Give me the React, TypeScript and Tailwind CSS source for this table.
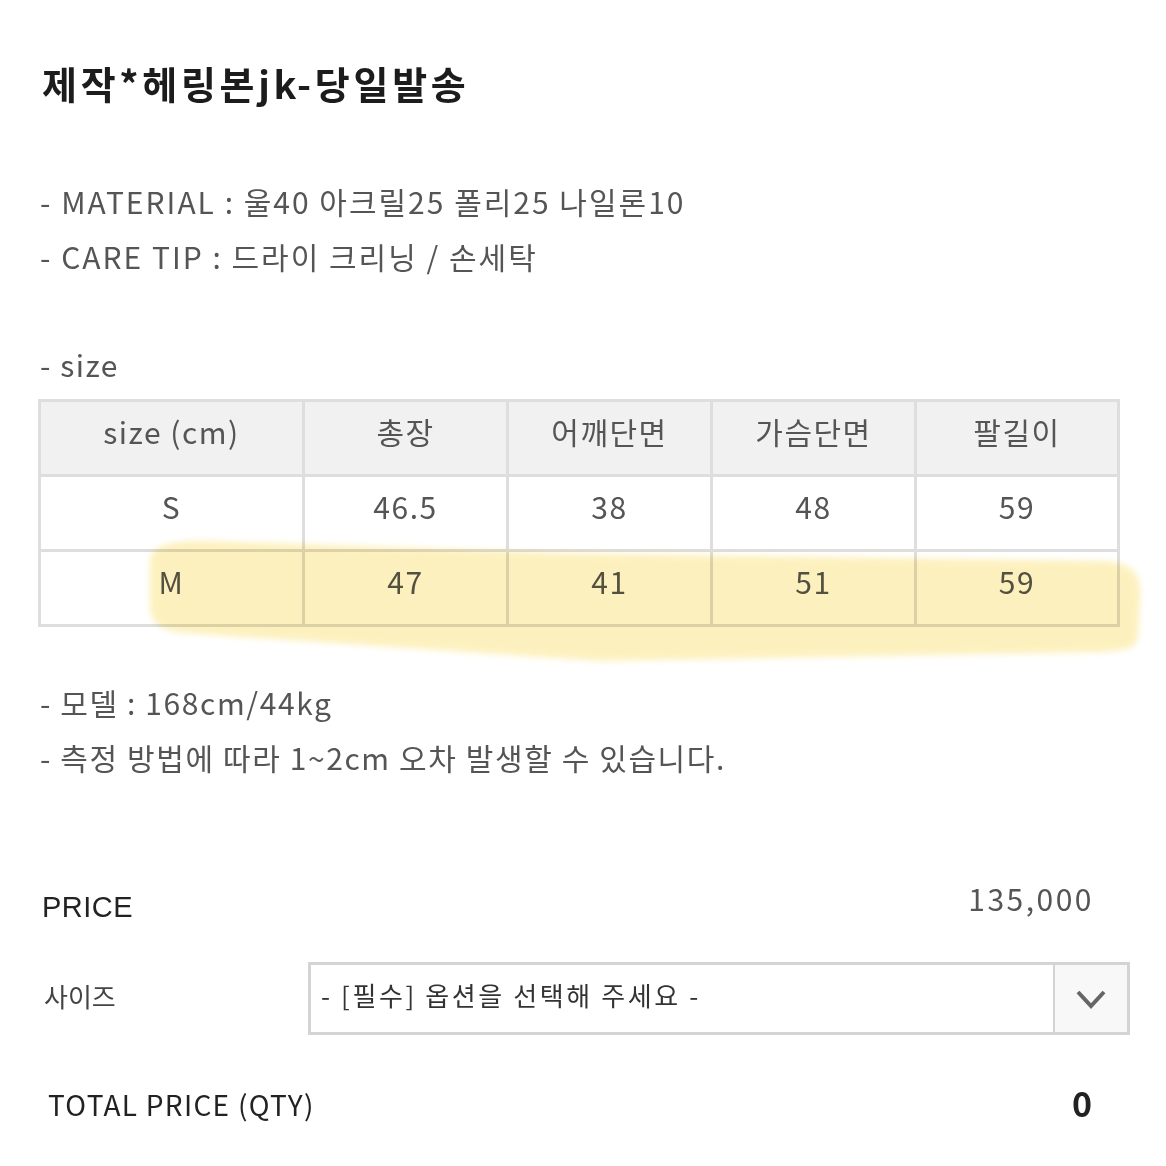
import React from "react";

const font = { fontFamily: '"Noto Sans CJK KR", "Noto Sans", sans-serif' };

const header = ["size (cm)", "총장", "어깨단면", "가슴단면", "팔길이"];
const rows = [
  ["S", "46.5", "38", "48", "59"],
  ["M", "47", "41", "51", "59"],
];

export default function App() {
  return (
    <div className="relative w-[1166px] h-[1166px] bg-white overflow-hidden" style={font}>
      <div className="pl-[40px] pr-[46px] flex flex-col">
        <h1 className="mt-[59px] text-[38px] leading-[48px] font-bold text-[#1c1c1c] pl-[2px] tracking-[3.7px]">
          제작*헤링본jk-당일발송
        </h1>

        <div className="mt-[67px] text-[30px] leading-[55px] text-[#555] tracking-[2px]">
          <p>- MATERIAL : 울40 아크릴25 폴리25 나일론10</p>
          <p>- CARE TIP : 드라이 크리닝 / 손세탁</p>
        </div>

        <p className="mt-[53px] text-[30px] leading-[55px] text-[#555] tracking-[1.5px]">- size</p>

        <div className="mt-[7px] ml-[-2px] grid grid-cols-[261px_201px_201px_201px_200px] gap-[3px] p-[3px] bg-[#dedede] text-[30px] text-[#555] w-[1082px] tracking-[1.5px]">
          {header.map((h) => (
            <div key={h} className="h-[72px] pb-[14px] bg-[#f1f1f1] flex items-center justify-center">
              {h}
            </div>
          ))}
          {rows.map((r, i) =>
            r.map((c, j) => (
              <div key={i + "-" + j} className="h-[72px] pb-[14px] bg-white flex items-center justify-center">
                {c}
              </div>
            ))
          )}
        </div>

        <div className="mt-[48px] text-[30px] leading-[55px] text-[#555] tracking-[1.6px]">
          <p>- 모델 : 168cm/44kg</p>
          <p>- 측정 방법에 따라 1~2cm 오차 발생할 수 있습니다.</p>
        </div>

        <div className="mt-[93px] flex justify-between items-start pr-[28px]">
          <span className="text-[29px] leading-[40px] mt-[9px] text-[#222] pl-[2px] tracking-[0.5px]" style={{ fontFamily: '"Liberation Sans", Arial, sans-serif' }}>PRICE</span>
          <span className="text-[30px] leading-[40px] text-[#555] tracking-[2.5px] -mr-[2px]">135,000</span>
        </div>

        <div className="mt-[35px] flex items-center">
          <span className="w-[268px] text-[26px] text-[#444] pl-[4px] pb-[6px]">사이즈</span>
          <div className="flex-1 h-[73px] border-[3px] border-[#d4d4d4] flex items-stretch bg-white -mr-[10px]">
            <div className="flex-1 flex items-center pl-[10px] pb-[8px] text-[26px] text-[#333] tracking-[2.6px]">- [필수] 옵션을 선택해 주세요 -</div>
            <div className="w-[74px] border-l-[2px] border-[#d4d4d4] bg-[#f8f8f8] flex items-center justify-center">
              <svg width="32" height="20" viewBox="0 0 32 20" fill="none">
                <path d="M3 3 L16 17 L29 3" stroke="#666" strokeWidth="4" />
              </svg>
            </div>
          </div>
        </div>

        <div className="mt-[48px] flex justify-between items-center pr-[28px]">
          <span className="text-[28px] leading-[40px] text-[#222] pl-[8px] tracking-[1.3px]">TOTAL PRICE (QTY)</span>
          <span className="text-[34px] leading-[40px] font-bold text-[#222] pb-[2px]">0</span>
        </div>
      </div>

      <svg className="absolute left-0 top-0 pointer-events-none mix-blend-multiply" width="1166" height="1166">
        <defs>
          <filter id="soft" x="-5%" y="-30%" width="110%" height="160%">
            <feGaussianBlur stdDeviation="3" />
          </filter>
        </defs>
        <path
          d="M150,562 C150,546 170,540 205,541 L560,553 L1100,561 C1135,562 1142,575 1140,600 L1138,638 C1136,650 1120,651 1100,652 L600,661 L185,633 C158,631 150,620 150,605 Z"
          fill="#fbe793"
          opacity="0.6"
          filter="url(#soft)"
        />
      </svg>
    </div>
  );
}
